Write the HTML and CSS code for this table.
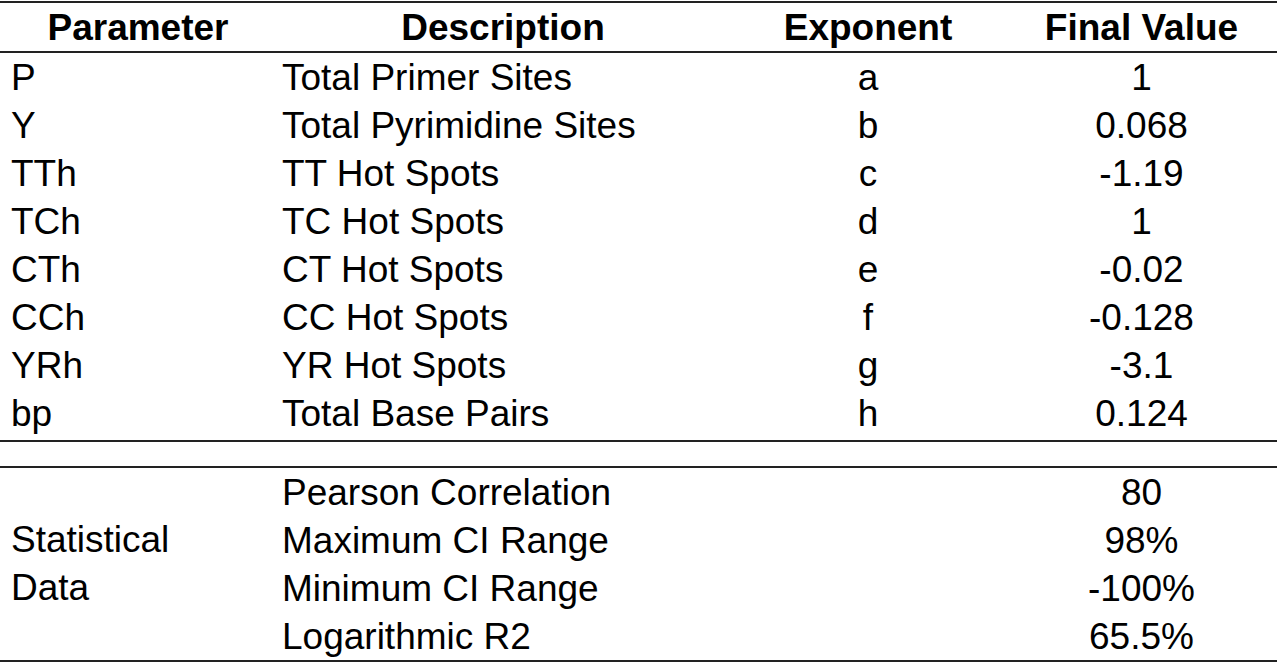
FILE: index.html
```html
<!DOCTYPE html>
<html>
<head>
<meta charset="utf-8">
<link rel="stylesheet" href="styles.css">
</head>
<body>
<table class="tbl">
  <colgroup>
    <col class="c1"><col class="c2"><col class="c3"><col class="c4">
  </colgroup>
  <thead>
    <tr class="head">
      <th>Parameter</th><th>Description</th><th>Exponent</th><th>Final Value</th>
    </tr>
  </thead>
  <tbody class="params">
    <tr><td class="name">P</td><td class="desc">Total Primer Sites</td><td class="mid">a</td><td class="mid">1</td></tr>
    <tr><td class="name">Y</td><td class="desc">Total Pyrimidine Sites</td><td class="mid">b</td><td class="mid">0.068</td></tr>
    <tr><td class="name">TTh</td><td class="desc">TT Hot Spots</td><td class="mid">c</td><td class="mid">-1.19</td></tr>
    <tr><td class="name">TCh</td><td class="desc">TC Hot Spots</td><td class="mid">d</td><td class="mid">1</td></tr>
    <tr><td class="name">CTh</td><td class="desc">CT Hot Spots</td><td class="mid">e</td><td class="mid">-0.02</td></tr>
    <tr><td class="name">CCh</td><td class="desc">CC Hot Spots</td><td class="mid">f</td><td class="mid">-0.128</td></tr>
    <tr><td class="name">YRh</td><td class="desc">YR Hot Spots</td><td class="mid">g</td><td class="mid">-3.1</td></tr>
    <tr class="last"><td class="name">bp</td><td class="desc">Total Base Pairs</td><td class="mid">h</td><td class="mid">0.124</td></tr>
  </tbody>
  <tbody class="spacer">
    <tr><td colspan="4"></td></tr>
  </tbody>
  <tbody class="stats">
    <tr><td class="name group" rowspan="4">Statistical<br>Data</td><td class="desc">Pearson Correlation</td><td></td><td class="mid">80</td></tr>
    <tr><td class="desc">Maximum CI Range</td><td></td><td class="mid">98%</td></tr>
    <tr><td class="desc">Minimum CI Range</td><td></td><td class="mid">-100%</td></tr>
    <tr><td class="desc">Logarithmic R2</td><td></td><td class="mid">65.5%</td></tr>
  </tbody>
</table>
</body>
</html>
```

FILE: styles.css
```css
html, body {
  margin: 0;
  padding: 0;
  background: #ffffff;
}

body {
  font-family: "Liberation Sans", Arial, sans-serif;
  color: #000000;
}

.tbl {
  width: 1277px;
  margin-top: 1px;
  border-collapse: collapse;
  table-layout: fixed;
  border-top: 2px solid #222;
  border-bottom: 2px solid #222;
}

.c1 { width: 276px; }
.c2 { width: 454px; }
.c3 { width: 276px; }
.c4 { width: 271px; }

.tbl th,
.tbl td {
  padding: 0;
  white-space: nowrap;
}

.head th {
  font-size: 37px;
  font-weight: bold;
  text-align: center;
  height: 40px;
  line-height: 40px;
  padding-top: 5px;
  padding-bottom: 3px;
  vertical-align: top;
  border-bottom: 2px solid #222;
}

.params td,
.stats td {
  font-size: 37px;
  height: 48px;
  line-height: 46px;
  padding-top: 2px;
  vertical-align: top;
  box-sizing: border-box;
}

.params tr.last td {
  height: 52px;
}

.spacer td {
  height: 24px;
  border-top: 2px solid #222;
  border-bottom: 2px solid #222;
}

.name {
  text-align: left;
  padding-left: 11px !important;
}

.desc {
  text-align: left;
  padding-left: 6px !important;
}

.mid {
  text-align: center;
}

.stats td.group {
  vertical-align: middle;
  line-height: 48px;
  padding-top: 0;
}
```
